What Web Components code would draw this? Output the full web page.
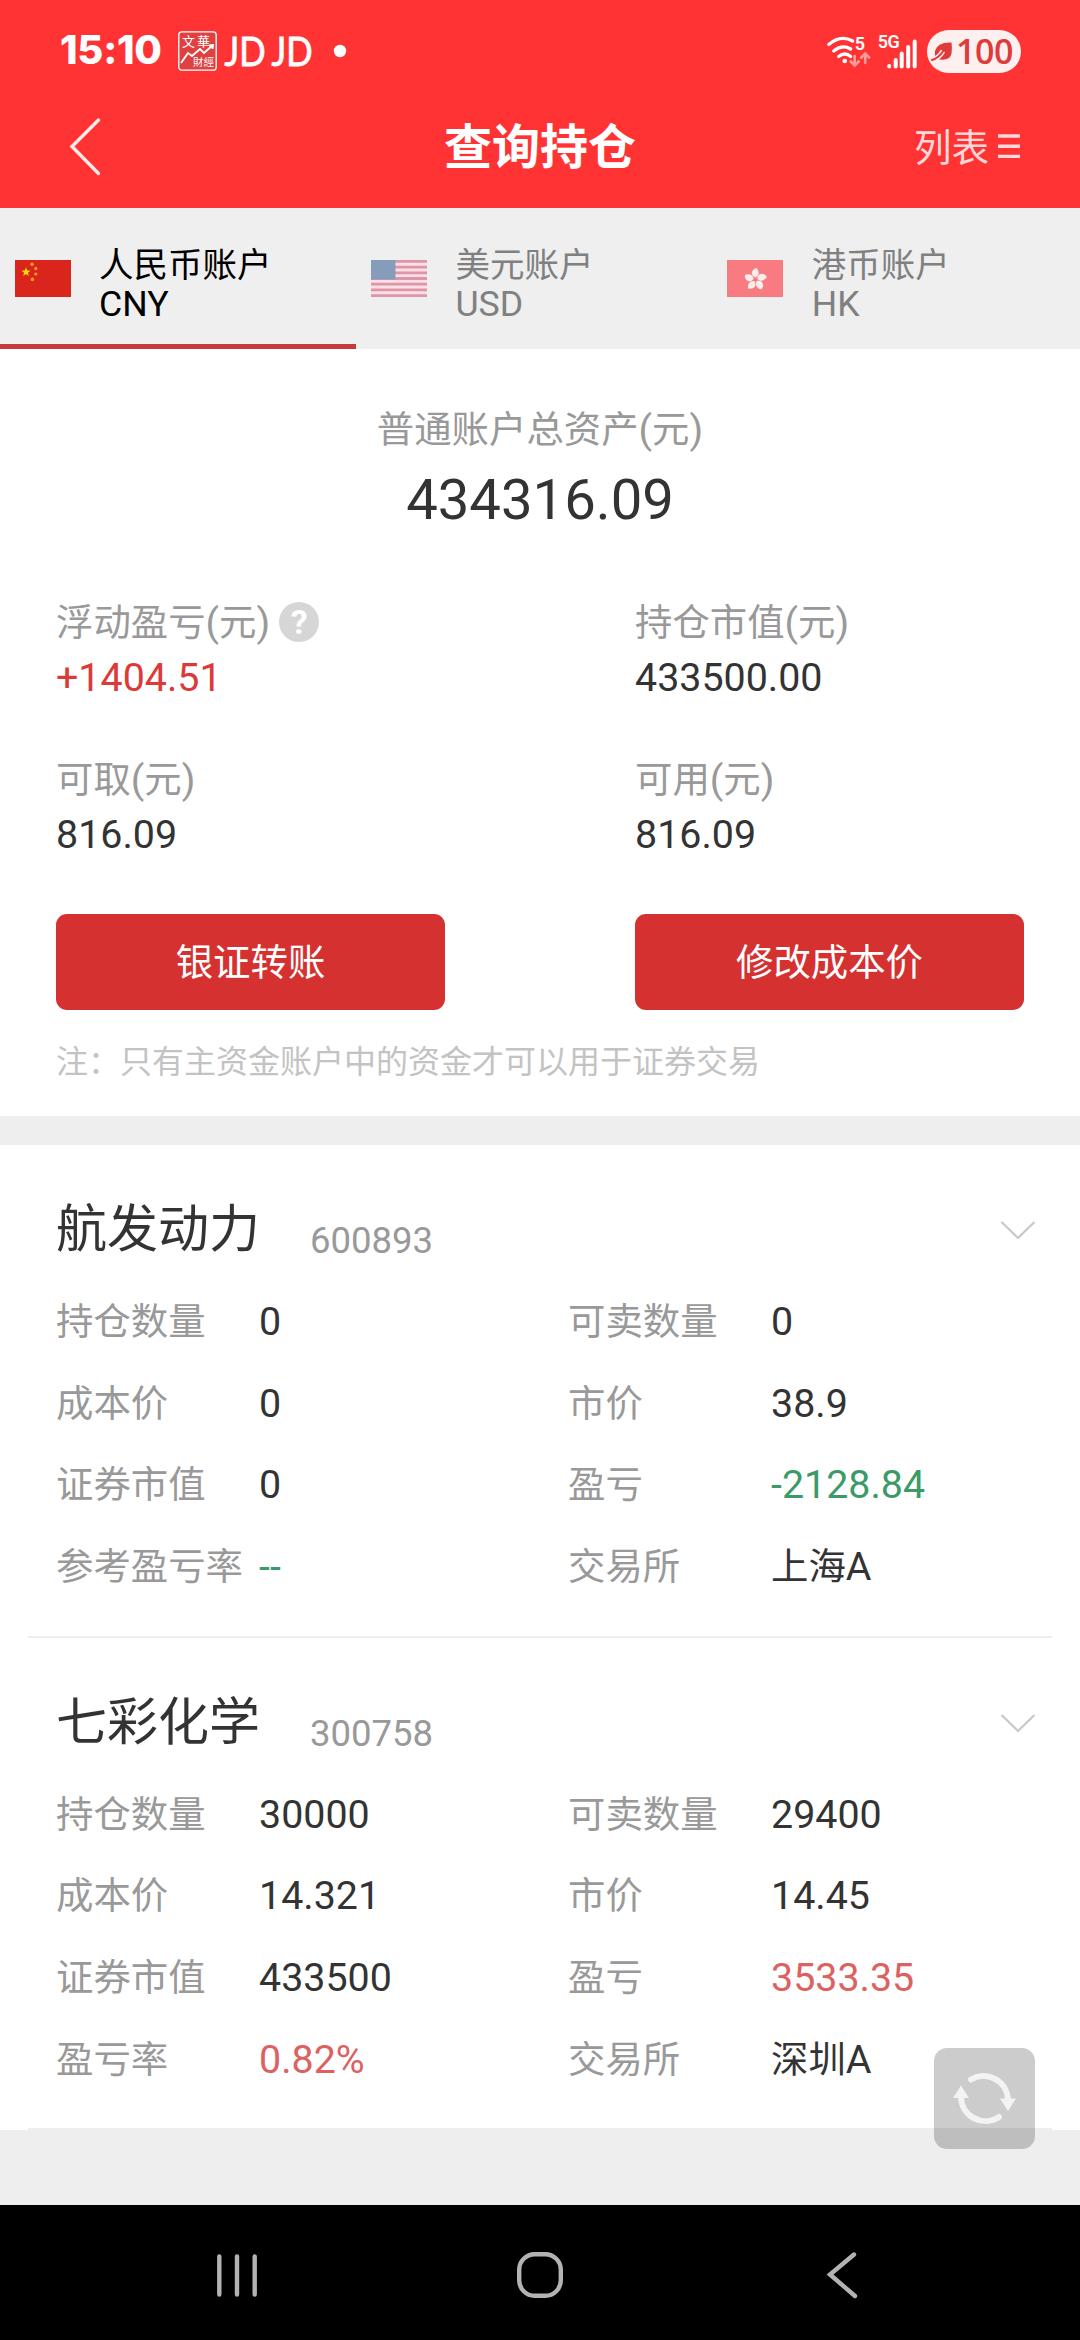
<!DOCTYPE html>
<html lang="zh-CN">
<head>
<meta charset="UTF-8">
<title>查询持仓</title>
<style>
    :root{
        --header: #ff3333;
        --primary: #d53130;
        --up: #dc3a38;
        --down: #3a9b68;
        --text: #333333;
        --label: #999999;
        --line: #eeeeee;
    }
    body{
        margin: 0;
        width: 1080px;
        height: 2340px;
        overflow: hidden;
        background: var(--line);
        color: var(--text);
        font-family: Roboto, "Noto Sans CJK SC", sans-serif;
    }
</style>
</head>
<body>
<app-screen>
    <status-bar slot="top" time="15:10" battery="100"></status-bar>
    <title-bar slot="top" action="列表">查询持仓</title-bar>
    <currency-tabs slot="top">
        <currency-tab flag="cn" code="CNY" active>人民币账户</currency-tab>
        <currency-tab flag="us" code="USD">美元账户</currency-tab>
        <currency-tab flag="hk" code="HK">港币账户</currency-tab>
    </currency-tabs>
    <asset-summary label="普通账户总资产(元)" total="434316.09">
        <asset-field label="浮动盈亏(元)" up help>+1404.51</asset-field>
        <asset-field label="持仓市值(元)">433500.00</asset-field>
        <asset-field label="可取(元)">816.09</asset-field>
        <asset-field label="可用(元)">816.09</asset-field>
        <red-button slot="actions">银证转账</red-button>
        <red-button slot="actions">修改成本价</red-button>
        <span slot="note">注：只有主资金账户中的资金才可以用于证券交易</span>
    </asset-summary>
    <stock-card name="航发动力" code="600893">
        <stock-field label="持仓数量">0</stock-field>
        <stock-field label="可卖数量">0</stock-field>
        <stock-field label="成本价">0</stock-field>
        <stock-field label="市价">38.9</stock-field>
        <stock-field label="证券市值">0</stock-field>
        <stock-field label="盈亏" trend="down">-2128.84</stock-field>
        <stock-field label="参考盈亏率" trend="down">--</stock-field>
        <stock-field label="交易所"><span>上海</span>A</stock-field>
    </stock-card>
    <stock-card name="七彩化学" code="300758">
        <stock-field label="持仓数量">30000</stock-field>
        <stock-field label="可卖数量">29400</stock-field>
        <stock-field label="成本价">14.321</stock-field>
        <stock-field label="市价">14.45</stock-field>
        <stock-field label="证券市值">433500</stock-field>
        <stock-field label="盈亏" trend="up">3533.35</stock-field>
        <stock-field label="盈亏率" trend="up">0.82%</stock-field>
        <stock-field label="交易所"><span>深圳</span>A</stock-field>
    </stock-card>
    <refresh-button slot="float"></refresh-button>
    <system-nav slot="bottom"></system-nav>
</app-screen>

<script>
    const flags = {
        cn: /*html*/`
            <rect width="56" height="37" fill="#da251d"/>
            <path d="M11 7.500l1.200 3.100 3.300.1-2.600 2 .9 3.300-2.800-1.900-2.800 1.900.9-3.300-2.600-2 3.300-.1z" fill="#ffdf00"/>
            <g fill="#f3a01c">
                <circle cx="17" cy="4.200" r="1.700"/><circle cx="20.800" cy="8.400" r="1.600"/>
                <circle cx="20.800" cy="14" r="1.600"/><circle cx="17.400" cy="19.400" r="1.800"/>
            </g>`,
        us: /*html*/`
            <rect width="56" height="37" fill="#fbdfe5"/>
            <path d="M0 1.400h56M0 7.100h56M0 12.800h56M0 18.500h56M0 24.200h56M0 29.900h56M0 35.600h56" stroke="#dd95a8" stroke-width="2.800"/>
            <rect width="24.500" height="19.500" fill="#869cbb"/>`,
        hk: /*html*/`
            <rect width="56" height="37" fill="#f77b80"/>
            <g fill="#fdecec" transform="translate(28.500 19.500)">
                <path id="p" d="M0-2C-6-4-4-10.500 1-11.500C4-8 4-4 0-2z"/>
                <use href="#p" transform="rotate(72)"/><use href="#p" transform="rotate(144)"/>
                <use href="#p" transform="rotate(216)"/><use href="#p" transform="rotate(288)"/>
            </g>`
    }

    // parentheses are a little bigger than the chinese text
    const unit = (text) => text.replace(/[()]/g, (c) => `<span style="font-size:1.053em">${c}</span>`)

    // shared base: each element only gives its own html
    class BaseElement extends HTMLElement {
        constructor() {
            super();
            this.attachShadow({ mode: "open" });
        }
        connectedCallback() {
            this.shadowRoot.innerHTML = this.render();
        }
        attr(name) {
            return this.getAttribute(name) || "";
        }
    }

    class AppScreen extends BaseElement {
        render() {
            return /*html*/`
                <style>
                    :host{
                        display: flex;
                        flex-direction: column;
                        position: relative;
                        height: 2340px;
                    }
                    main{
                        flex: 1;
                        min-height: 0;
                    }
                    ::slotted([slot="float"]){
                        position: absolute;
                        right: 45px;
                        bottom: 191px;
                    }
                </style>
                <slot name="top"></slot>
                <main><slot></slot></main>
                <slot name="bottom"></slot>
                <slot name="float"></slot>
            `;
        }
    }

    class StatusBar extends BaseElement {
        render() {
            return /*html*/`
                <style>
                    :host{
                        display: flex;
                        align-items: center;
                        justify-content: space-between;
                        box-sizing: border-box;
                        height: 84px;
                        padding: 18px 59px 0 60px;
                        background: var(--header);
                        color: #fff;
                    }
                    div{
                        display: flex;
                        align-items: center;
                    }
                    .time{
                        width: 118px;
                        font: 800 40px/48px Inter, sans-serif;
                        letter-spacing: -0.3px;
                        padding-bottom: 2px;
                    }
                    svg{
                        display: block;
                    }
                    .battery{
                        box-sizing: border-box;
                        width: 94px;
                        height: 43px;
                        margin-left: 10px;
                        padding-left: 4px;
                        gap: 3px;
                        border-radius: 22px;
                        background: #fff0f0;
                        color: #e03a3a;
                        font: 600 34px/43px "Open Sans", sans-serif;
                        letter-spacing: -0.5px;
                    }
                </style>
                <div>
                    <span class="time">${this.attr("time")}</span>
                    <svg width="170" height="60" viewBox="0 -8 170 60" fill="none" stroke="#fff">
                        <rect x=".8" y="2.800" width="37.400" height="38.400" rx="3" stroke-width="1.300" fill="#e04040"/>
                        <g fill="#fff" stroke="none" font-family="Noto Sans CJK TC, sans-serif">
                            <text x="4" y="17" font-size="13" textLength="28">文華</text>
                            <text x="15" y="37" font-size="10.500" textLength="21">財經</text>
                        </g>
                        <path d="M3 34l7-10 4 3 8-7 4 4 9-8M31 16.500l4-.5-.5 4" stroke-width="1.900"/>
                        <g fill="#fff" stroke-width=".9" font-family="Lato, sans-serif" font-size="40">
                            <text x="46.500" y="36.500" textLength="41" lengthAdjust="spacingAndGlyphs">JD</text>
                            <text x="93.500" y="36.500" textLength="41" lengthAdjust="spacingAndGlyphs">JD</text>
                        </g>
                        <circle cx="162" cy="22" r="6.200" fill="#fff" stroke="none"/>
                    </svg>
                </div>
                <div>
                    <svg width="92" height="44" viewBox="-.7 0 92 44" fill="none" stroke="#fff" stroke-linecap="round">
                        <path d="M3 15.500Q15 5.500 27 12M8 22q8.500-7 17-2M13 27.500q6-5 12 0" stroke-width="3.200"/>
                        <circle cx="19" cy="32" r="2.300" fill="#fff" stroke="none"/>
                        <path d="M29 27v9m-4-3.500l4 4 4-4M39.500 34v-9m-4 3.500l4-4 4 4" stroke="#ff9c9c" stroke-width="2.600"/>
                        <g fill="#fff" stroke="none" font-family="Roboto, sans-serif" font-weight="600">
                            <text x="29" y="21" font-size="18">5</text>
                            <text x="52" y="18.500" font-size="18" textLength="22">5G</text>
                        </g>
                        <path d="M63.500 37v.5M70 31v6.500M76 24.500v13M82.500 18v19.500M89 12.500v25" stroke-width="4"/>
                    </svg>
                    <div class="battery">
                        <svg width="22" height="24" viewBox="0 0 22 24">
                            <path d="M4 12Q6 3 20.500 3.500Q22 16 18 19Q14 22 6 20Q3 17 4 12z" fill="#e03a3a"/>
                            <path d="M12 12Q8 19 1 21" fill="none" stroke="#fff0f0" stroke-width="5"/>
                            <path d="M12.500 11.500Q8 19 1 21" fill="none" stroke="#e03a3a" stroke-width="2" stroke-linecap="round"/>
                        </svg>
                        <span>${this.attr("battery")}</span>
                    </div>
                </div>
            `;
        }
    }

    class TitleBar extends BaseElement {
        render() {
            return /*html*/`
                <style>
                    :host{
                        display: grid;
                        grid-template-columns: 1fr auto 1fr;
                        align-items: center;
                        height: 124px;
                        background: var(--header);
                        color: #fff;
                    }
                    h1{
                        margin: 0;
                        padding-top: 4px;
                        font-size: 48px;
                        font-weight: 700;
                        line-height: 120px;
                    }
                    .back{
                        margin-left: 68px;
                    }
                    .action{
                        display: flex;
                        align-items: center;
                        justify-content: flex-end;
                        gap: 9px;
                        margin-right: 59px;
                        color: #ffd9d9;
                        font-size: 37.500px;
                    }
                    .action span{
                        padding-bottom: 4px;
                    }
                </style>
                <svg class="back" width="36" height="62" viewBox="0 0 36 62" fill="none" stroke="#ffeaea" stroke-width="3.400" stroke-linecap="round">
                    <path d="M30.500 5L4 31.500l26.500 27"/>
                </svg>
                <h1><slot></slot></h1>
                <div class="action">
                    <span>${this.attr("action")}</span>
                    <svg width="23" height="26" viewBox="0 0 23 26" stroke="#ffd9d9" stroke-width="3.400">
                        <path d="M0 3h22M0 13.200h22M0 23.400h22"/>
                    </svg>
                </div>
            `;
        }
    }

    class CurrencyTabs extends BaseElement {
        render() {
            return /*html*/`
                <style>
                    :host{
                        display: grid;
                        grid-template-columns: repeat(3, 33%);
                        height: 141px;
                        background: #efefef;
                    }
                </style>
                <slot></slot>
            `;
        }
    }

    class CurrencyTab extends BaseElement {
        render() {
            return /*html*/`
                <style>
                    :host{
                        display: flex;
                        box-sizing: border-box;
                        padding: 52px 0 0 14.500px;
                        gap: 28.500px;
                        color: #808080;
                        font-size: 34.500px;
                        line-height: 39px;
                        border-bottom: 5px solid transparent;
                    }
                    :host([active]){
                        color: #000;
                        border-bottom-color: #c83a3a;
                    }
                    p{
                        margin: -14px 0 0;
                    }
                    .code{
                        font-size: 35.700px;
                    }
                </style>
                <svg width="56" height="37" viewBox="0 0 56 37">${flags[this.attr("flag")]}</svg>
                <p><slot></slot><br><span class="code">${this.attr("code")}</span></p>
            `;
        }
    }

    class AssetSummary extends BaseElement {
        render() {
            return /*html*/`
                <style>
                    :host{
                        display: block;
                        box-sizing: border-box;
                        height: 767px;
                        padding: 56px 56px 0;
                        background: #fff;
                    }
                    .label{
                        height: 50px;
                        text-align: center;
                        color: var(--label);
                        font-size: 37.400px;
                        line-height: 50px;
                    }
                    .total{
                        margin: 10px 0 63px;
                        text-align: center;
                        font-size: 56.250px;
                        line-height: 70px;
                    }
                    .grid{
                        display: grid;
                        grid-template-columns: 389px 389px;
                        justify-content: space-between;
                        row-gap: 52px;
                    }
                    .actions{
                        margin-top: 54px;
                    }
                    .note{
                        margin-top: 32px;
                        color: #c3c3c3;
                        font-size: 32px;
                        line-height: 40px;
                    }
                </style>
                <div class="label">${unit(this.attr("label"))}</div>
                <div class="total">${this.attr("total")}</div>
                <div class="grid"><slot></slot></div>
                <div class="grid actions"><slot name="actions"></slot></div>
                <div class="note"><slot name="note"></slot></div>
            `;
        }
    }

    class AssetField extends BaseElement {
        render() {
            const help = this.hasAttribute("help") ? "<i>?</i>" : "";
            return /*html*/`
                <style>
                    :host{
                        display: block;
                        line-height: 50px;
                        font-size: 39.400px;
                    }
                    :host([up]) .value{
                        color: var(--up);
                    }
                    .label{
                        display: flex;
                        align-items: center;
                        height: 50px;
                        margin-bottom: 5px;
                        color: var(--label);
                        font-size: 37.400px;
                    }
                    i{
                        width: 40px;
                        height: 40px;
                        margin: -2px 0 0 9px;
                        border-radius: 50%;
                        background: #d6d6d6;
                        color: #fff;
                        font: 700 34px/41px Roboto, sans-serif;
                        text-align: center;
                    }
                </style>
                <div class="label"><span>${unit(this.attr("label"))}</span>${help}</div>
                <div class="value"><slot></slot></div>
            `;
        }
    }

    class RedButton extends BaseElement {
        render() {
            return /*html*/`
                <style>
                    :host{
                        display: block;
                    }
                    button{
                        display: block;
                        width: 100%;
                        height: 96px;
                        padding: 0 0 4px;
                        border: 0;
                        border-radius: 11px;
                        background: var(--primary);
                        color: #fff;
                        font: inherit;
                        font-size: 37.400px;
                    }
                </style>
                <button><slot></slot></button>
            `;
        }
    }

    class StockCard extends BaseElement {
        render() {
            return /*html*/`
                <style>
                    :host{
                        display: block;
                        box-sizing: border-box;
                        height: 492.500px;
                        padding: 0 28px;
                        background: #fff;
                    }
                    :host(:first-of-type){
                        margin-top: 29px;
                    }
                    article{
                        box-sizing: border-box;
                        height: 100%;
                        padding: 0 28px;
                        border-bottom: 2px solid var(--line);
                    }
                    header{
                        display: flex;
                        box-sizing: border-box;
                        height: 136px;
                        padding-top: 55px;
                    }
                    h2{
                        margin: 0;
                        width: 254px;
                        font-size: 51px;
                        font-weight: 400;
                        line-height: 60px;
                    }
                    .code{
                        flex: 1;
                        color: var(--label);
                        font-size: 36.500px;
                        line-height: 82px;
                    }
                    header svg{
                        margin: 19px -12px 0 0;
                    }
                    .fields{
                        display: grid;
                        grid-template-columns: 512px 1fr;
                        grid-auto-rows: 81.700px;
                    }
                </style>
                <article>
                    <header>
                        <h2>${this.attr("name")}</h2>
                        <span class="code">${this.attr("code")}</span>
                        <svg width="36" height="22" viewBox="0 0 36 22" fill="none" stroke="#c8c8c8" stroke-width="2.200">
                            <path d="M1.500 3L18 19 34.500 3"/>
                        </svg>
                    </header>
                    <div class="fields"><slot></slot></div>
                </article>
            `;
        }
    }

    class StockField extends BaseElement {
        render() {
            return /*html*/`
                <style>
                    :host{
                        display: flex;
                        line-height: 81px;
                        font-size: 39.400px;
                        white-space: nowrap;
                    }
                    :host([trend="up"]) .value{
                        color: #dd6161;
                    }
                    :host([trend="down"]) .value{
                        color: var(--down);
                    }
                    .label{
                        width: 203px;
                        color: var(--label);
                        font-size: 37.400px;
                        line-height: 83px;
                    }
                    ::slotted(span){
                        font-size: 37.400px;
                    }
                </style>
                <span class="label">${this.attr("label")}</span>
                <span class="value"><slot></slot></span>
            `;
        }
    }

    class RefreshButton extends BaseElement {
        render() {
            return /*html*/`
                <style>
                    :host{
                        display: block;
                        width: 101px;
                        height: 101px;
                        border-radius: 13px;
                        background: rgba(0, 0, 0, 0.2);
                    }
                </style>
                <svg width="101" height="101" viewBox="0 0 101 101" fill="none" stroke="#f3f3f3" stroke-width="6" stroke-linecap="round">
                    <path d="M37 31.500A24.500 24.500 0 0 1 74 51M65 69A24.500 24.500 0 0 1 27 49"/>
                    <path d="M27 37.500L35 50H19zM74 63L66 50.500h16z" fill="#f3f3f3" stroke="none"/>
                </svg>
            `;
        }
    }

    class SystemNav extends BaseElement {
        render() {
            return /*html*/`
                <style>
                    :host{
                        display: flex;
                        align-items: center;
                        justify-content: space-between;
                        box-sizing: border-box;
                        height: 135px;
                        padding: 4px 212px 0 212px;
                        background: #000;
                    }
                    svg{
                        fill: none;
                        stroke: #b3b3b3;
                        stroke-width: 4.4px;
                        stroke-linecap: round;
                    }
                </style>
                <svg width="50" height="50" viewBox="0 0 50 50"><path d="M7.300 6.500v38M25 6.500v38M42.700 6.500v38"/></svg>
                <svg width="50" height="50" viewBox="0 0 50 50"><rect x="4.200" y="4.200" width="41.600" height="41.600" rx="15.500"/></svg>
                <svg width="50" height="50" viewBox="0 0 50 50"><path d="M36 4.500L12 24.500l25 21.500"/></svg>
            `;
        }
    }

    customElements.define('app-screen', AppScreen);
    customElements.define('status-bar', StatusBar);
    customElements.define('title-bar', TitleBar);
    customElements.define('currency-tabs', CurrencyTabs);
    customElements.define('currency-tab', CurrencyTab);
    customElements.define('asset-summary', AssetSummary);
    customElements.define('asset-field', AssetField);
    customElements.define('red-button', RedButton);
    customElements.define('stock-card', StockCard);
    customElements.define('stock-field', StockField);
    customElements.define('refresh-button', RefreshButton);
    customElements.define('system-nav', SystemNav);
</script>
</body>
</html>
